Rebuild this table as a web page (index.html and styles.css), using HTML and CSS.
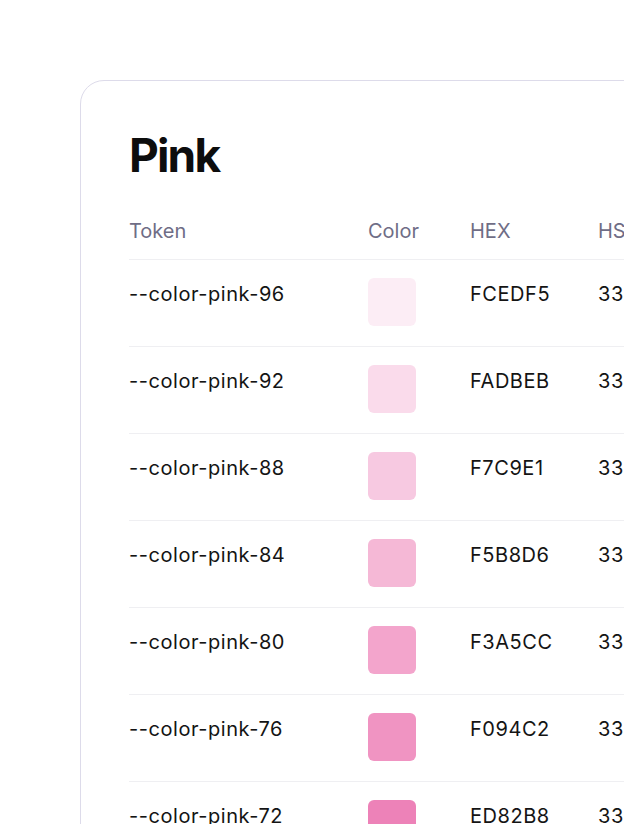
FILE: index.html
```html
<!DOCTYPE html>
<html lang="en">
<head>
<meta charset="utf-8">
<title>Pink</title>
<link rel="stylesheet" href="styles.css">
</head>
<body>
<div class="card">
  <h1 class="title">Pink</h1>
  <div class="table">
    <div class="row head">
      <div class="c-token">Token</div>
      <div class="c-color">Color</div>
      <div class="c-hex">HEX</div>
      <div class="c-hsl">HSL</div>
    </div>
    <div class="row">
      <div class="c-token">--color-pink-96</div>
      <div class="c-color"><span class="swatch" style="background:#FCEDF5"></span></div>
      <div class="c-hex">FCEDF5</div>
      <div class="c-hsl">330 75% 96%</div>
    </div>
    <div class="row">
      <div class="c-token">--color-pink-92</div>
      <div class="c-color"><span class="swatch" style="background:#FADBEB"></span></div>
      <div class="c-hex">FADBEB</div>
      <div class="c-hsl">330 75% 92%</div>
    </div>
    <div class="row">
      <div class="c-token">--color-pink-88</div>
      <div class="c-color"><span class="swatch" style="background:#F7C9E1"></span></div>
      <div class="c-hex">F7C9E1</div>
      <div class="c-hsl">330 75% 88%</div>
    </div>
    <div class="row">
      <div class="c-token">--color-pink-84</div>
      <div class="c-color"><span class="swatch" style="background:#F5B8D6"></span></div>
      <div class="c-hex">F5B8D6</div>
      <div class="c-hsl">330 75% 84%</div>
    </div>
    <div class="row">
      <div class="c-token">--color-pink-80</div>
      <div class="c-color"><span class="swatch" style="background:#F3A5CC"></span></div>
      <div class="c-hex">F3A5CC</div>
      <div class="c-hsl">330 75% 80%</div>
    </div>
    <div class="row">
      <div class="c-token">--color-pink-76</div>
      <div class="c-color"><span class="swatch" style="background:#F094C2"></span></div>
      <div class="c-hex">F094C2</div>
      <div class="c-hsl">330 75% 76%</div>
    </div>
    <div class="row">
      <div class="c-token">--color-pink-72</div>
      <div class="c-color"><span class="swatch" style="background:#ED82B8"></span></div>
      <div class="c-hex">ED82B8</div>
      <div class="c-hsl">330 75% 72%</div>
    </div>
  </div>
</div>
</body>
</html>
```
FILE: styles.css
```css
html, body {
  margin: 0;
  padding: 0;
  background: #ffffff;
  overflow: hidden;
  width: 624px;
  height: 824px;
}
body {
  font-family: Inter, "Noto Sans", sans-serif;
  color: #111111;
}
.card {
  margin: 80px 0 0 80px;
  width: 760px;
  border: 1px solid #dddbea;
  border-radius: 24px;
  padding: 48px;
}
.title {
  margin: 0 0 38px 0;
  font-size: 46px;
  line-height: 52px;
  font-weight: 700;
  letter-spacing: -0.04em;
  color: #0d0d0d;
}
.table {
  display: flex;
  flex-direction: column;
}
.row {
  display: grid;
  grid-template-columns: 239px 102px 128px 1fr;
  border-bottom: 1px solid #efeff2;
  padding: 18px 0 20px 0;
  font-size: 20px;
  line-height: 32px;
  letter-spacing: 0.55px;
  color: #141414;
}
.row.head {
  padding: 0 0 16px 0;
  line-height: 24px;
  letter-spacing: 0;
  color: #6f6d86;
}
.swatch {
  display: block;
  width: 48px;
  height: 48px;
  border-radius: 6px;
}
.c-hsl {
  white-space: nowrap;
}
```
